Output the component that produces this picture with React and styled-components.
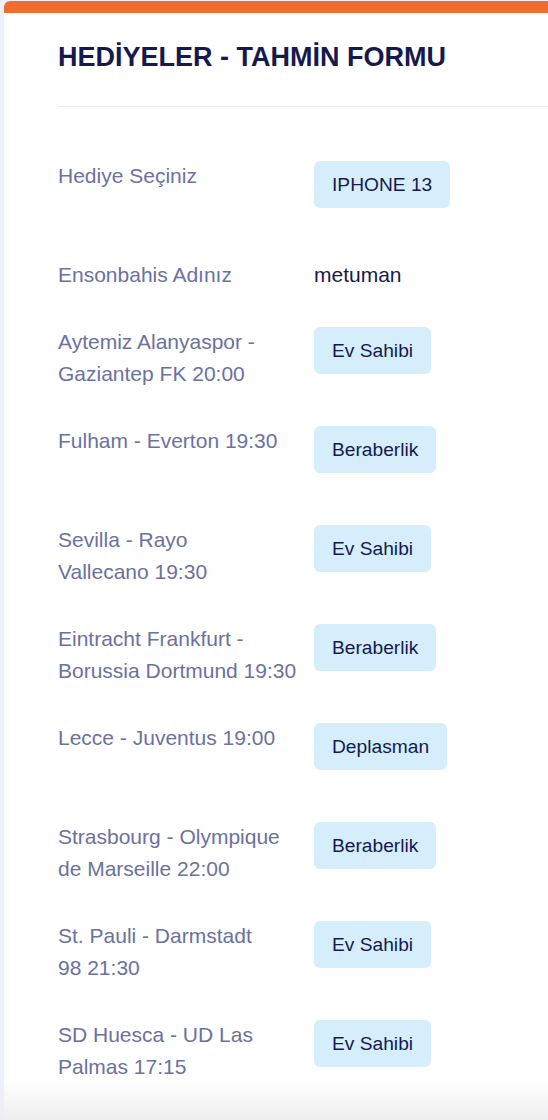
import styled, { createGlobalStyle } from 'styled-components';

const rows = [
    { label: ['Hediye Seçiniz'], choice: 'IPHONE 13' },
    { label: ['Ensonbahis Adınız'], value: 'metuman' },
    { label: ['Aytemiz Alanyaspor -', 'Gaziantep FK 20:00'], choice: 'Ev Sahibi' },
    { label: ['Fulham - Everton 19:30'], choice: 'Beraberlik' },
    { label: ['Sevilla - Rayo', 'Vallecano 19:30'], choice: 'Ev Sahibi' },
    { label: ['Eintracht Frankfurt -', 'Borussia Dortmund 19:30'], choice: 'Beraberlik' },
    { label: ['Lecce - Juventus 19:00'], choice: 'Deplasman' },
    { label: ['Strasbourg - Olympique', 'de Marseille 22:00'], choice: 'Beraberlik' },
    { label: ['St. Pauli - Darmstadt', '98 21:30'], choice: 'Ev Sahibi' },
    { label: ['SD Huesca - UD Las', 'Palmas 17:15'], choice: 'Ev Sahibi' },
];

const App = () => {
    return (
        <>
            <GlobalStyle />
            <Page>
                <Card>
                    <Title>HEDİYELER - TAHMİN FORMU</Title>
                    <Divider />
                    <Form>
                        {rows.map((row, i) => (
                            <Row key={i}>
                                <Label>
                                    {row.label.map((line) => (
                                        <Line key={line}>{line}</Line>
                                    ))}
                                </Label>
                                {row.choice ? (
                                    <Choice>{row.choice}</Choice>
                                ) : (
                                    <Value>{row.value}</Value>
                                )}
                            </Row>
                        ))}
                    </Form>
                </Card>
                <BottomFade />
            </Page>
        </>
    );
};

const GlobalStyle = createGlobalStyle`
    body {
        margin: 0;
        background: #eef0fb;
        font-family: "Liberation Sans", Arial, sans-serif;
        overflow: hidden;
    }
`;

const Page = styled.div`
    height: 1120px;
    padding: 1px 0 0 4px;
    box-sizing: border-box;
    overflow: hidden;
`;

const Card = styled.section`
    background: #fff;
    border-top: 12px solid #f26b2f;
    border-radius: 6px 0 0 0;
    padding: 28px 0 0 54px;
    min-height: 1200px;
`;

const Title = styled.h1`
    margin: 0;
    font-size: 27px;
    line-height: 32px;
    font-weight: bold;
    color: #141a4f;
`;

const Divider = styled.hr`
    margin: 33px 0 0;
    border: 0;
    border-top: 1px solid #ebebf0;
`;

const Form = styled.div`
    padding-top: 53px;
`;

const Row = styled.div`
    display: grid;
    grid-template-columns: 256px auto;
    align-items: start;
    margin-bottom: 35px;
`;

const Label = styled.div`
    font-size: 21px;
    line-height: 32px;
    color: #6b71a1;
`;

const Line = styled.span`
    display: block;
    white-space: nowrap;
`;

const Value = styled.div`
    font-size: 21px;
    line-height: 32px;
    color: #141a4f;
`;

const Choice = styled.div`
    justify-self: start;
    display: flex;
    align-items: center;
    height: 47px;
    margin: 1px 0 16px;
    padding: 0 18px;
    background: #d6eefc;
    border-radius: 6px;
    font-size: 19.2px;
    color: #141a4f;
`;

const BottomFade = styled.div`
    position: fixed;
    left: 0;
    right: 0;
    bottom: 0;
    height: 42px;
    background: linear-gradient(rgba(240, 240, 242, 0), rgba(238, 238, 240, 0.95));
    pointer-events: none;
`;

export default App;
